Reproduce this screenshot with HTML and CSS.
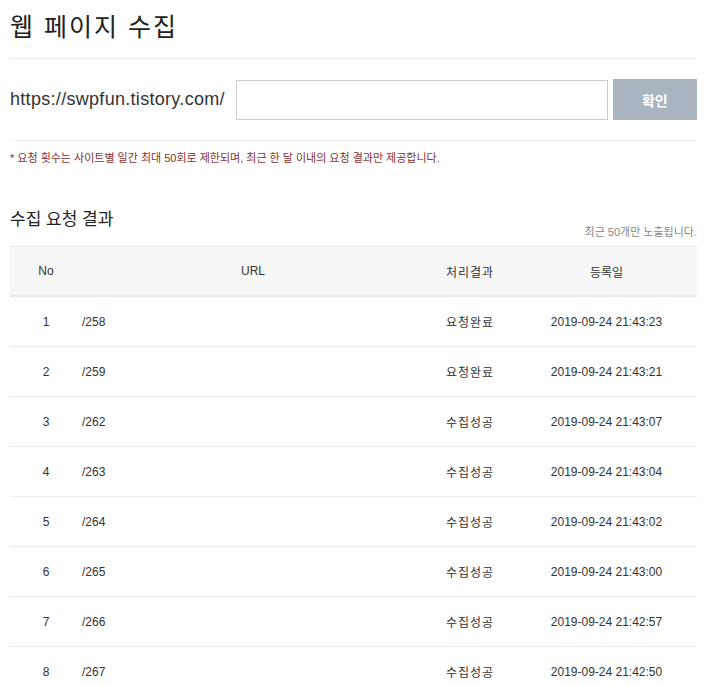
FILE: index.html
```html
<!DOCTYPE html>
<html lang="ko">
<head>
    <meta charset="UTF-8">
    <meta name="viewport" content="width=device-width, initial-scale=1.0">
    <title>웹 페이지 수집</title>
    <link rel="stylesheet" href="styles.css">
</head>
<body>
    <div class="wrap">
        <h1 class="page-title">웹 페이지 수집</h1>

        <form class="collect-form">
            <label for="path" class="base-url">https://swpfun.tistory.com/</label>
            <input type="text" id="path" class="path-input">
            <button type="submit" class="submit-btn">확인</button>
        </form>

        <p class="notice">* 요청 횟수는 사이트별 일간 최대 50회로 제한되며, 최근 한 달 이내의 요청 결과만 제공합니다.</p>

        <div class="result-head">
            <h2>수집 요청 결과</h2>
            <span class="result-hint">최근 50개만 노출됩니다.</span>
        </div>

        <table class="result-table">
            <thead>
                <tr>
                    <th class="col-no">No</th>
                    <th class="col-url">URL</th>
                    <th class="col-status">처리결과</th>
                    <th class="col-date">등록일</th>
                </tr>
            </thead>
            <tbody>
                <tr><td class="col-no">1</td><td class="col-url">/258</td><td class="col-status">요청완료</td><td class="col-date">2019-09-24 21:43:23</td></tr>
                <tr><td class="col-no">2</td><td class="col-url">/259</td><td class="col-status">요청완료</td><td class="col-date">2019-09-24 21:43:21</td></tr>
                <tr><td class="col-no">3</td><td class="col-url">/262</td><td class="col-status">수집성공</td><td class="col-date">2019-09-24 21:43:07</td></tr>
                <tr><td class="col-no">4</td><td class="col-url">/263</td><td class="col-status">수집성공</td><td class="col-date">2019-09-24 21:43:04</td></tr>
                <tr><td class="col-no">5</td><td class="col-url">/264</td><td class="col-status">수집성공</td><td class="col-date">2019-09-24 21:43:02</td></tr>
                <tr><td class="col-no">6</td><td class="col-url">/265</td><td class="col-status">수집성공</td><td class="col-date">2019-09-24 21:43:00</td></tr>
                <tr><td class="col-no">7</td><td class="col-url">/266</td><td class="col-status">수집성공</td><td class="col-date">2019-09-24 21:42:57</td></tr>
                <tr><td class="col-no">8</td><td class="col-url">/267</td><td class="col-status">수집성공</td><td class="col-date">2019-09-24 21:42:50</td></tr>
            </tbody>
        </table>
    </div>
</body>
</html>
```

FILE: styles.css
```css
body {
    margin: 0;
    font-family: "Liberation Sans", "Noto Sans CJK KR", sans-serif;
    color: #222;
    background: #fff;
}
.wrap {
    width: 687px;
    margin-left: 10px;
}
.page-title {
    margin: 0;
    padding-top: 10px;
    height: 59px;
    box-sizing: border-box;
    font-size: 25px;
    font-weight: normal;
    line-height: 34px;
    letter-spacing: 2px;
    border-bottom: 1px solid #eee;
}
.collect-form {
    display: flex;
    align-items: center;
    gap: 5px;
    padding: 20px 0;
    border-bottom: 1px solid #eee;
}
.base-url {
    font-size: 18px;
    color: #333;
    margin-right: 6px;
    letter-spacing: 0.3px;
}
.path-input {
    width: 372px;
    height: 40px;
    box-sizing: border-box;
    border: 1px solid #ccc;
    margin: 0;
}
.submit-btn {
    width: 84px;
    height: 41px;
    border: none;
    background-color: #a9b4c0;
    color: #fff;
    font-size: 14px;
    font-weight: bold;
    font-family: inherit;
}
.notice {
    margin: 8px 0 0;
    font-size: 11px;
    color: #8b2f2f;
}
.result-head {
    display: flex;
    justify-content: space-between;
    align-items: flex-end;
    margin-top: 40px;
    padding-bottom: 7px;
}
.result-head h2 {
    margin: 0 0 9px;
    font-size: 17px;
    font-weight: normal;
}
.result-hint {
    font-size: 11px;
    color: #888;
}
.result-table {
    width: 100%;
    border-collapse: collapse;
    border-top: 1px solid #e6e6e6;
    font-size: 12px;
    color: #333;
}
.result-table th {
    height: 48px;
    padding: 0;
    background: #f7f7f7;
    font-weight: normal;
    border-bottom: 2px solid #eaeaea;
}
.result-table td {
    height: 49px;
    padding: 0;
    border-bottom: 1px solid #ececec;
}
.col-no {
    width: 72px;
    text-align: center;
}
.result-table td.col-url {
    text-align: left;
}
.col-status {
    width: 92px;
    text-align: center;
    letter-spacing: 1px;
}
.col-date {
    width: 181px;
    text-align: center;
}
```
